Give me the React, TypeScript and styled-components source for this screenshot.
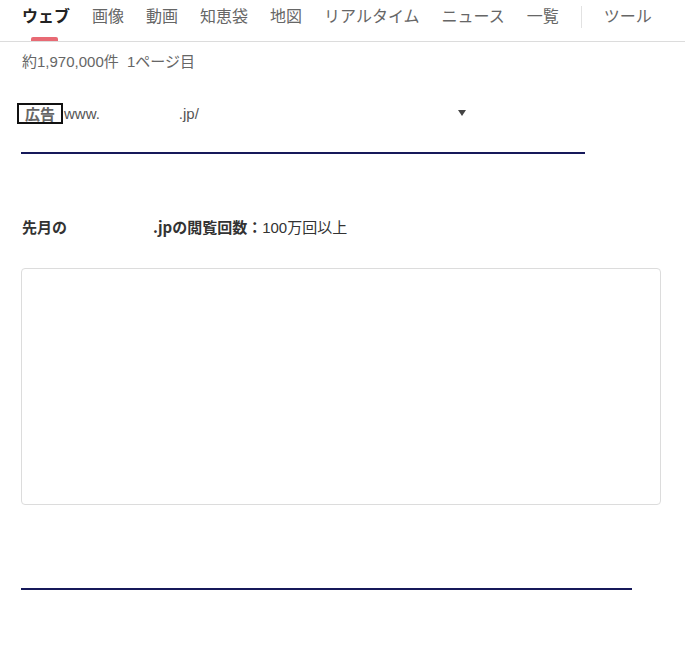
import React from 'react';
import styled, { createGlobalStyle } from 'styled-components';

const GlobalStyle = createGlobalStyle`
  body {
    margin: 0;
    background: #fff;
    font-family: "Liberation Sans", "Noto Sans CJK JP", sans-serif;
  }
`;

const Page = styled.div`
  width: 685px;
  height: 656px;
  overflow: hidden;
  background: #fff;
`;

const TabBar = styled.nav`
  display: flex;
  align-items: stretch;
  height: 41px;
  padding-left: 22px;
  gap: 22px;
  border-bottom: 1px solid #dcdcdc;
`;

const Tab = styled.div<{ $active?: boolean }>`
  position: relative;
  display: flex;
  align-items: flex-start;
  padding-top: 4px;
  font-family: "Noto Sans CJK JP", sans-serif;
  font-size: 16px;
  line-height: 22px;
  font-weight: ${(p) => (p.$active ? 700 : 400)};
  color: ${(p) => (p.$active ? '#222' : '#666')};
  white-space: nowrap;

  ${(p) => p.$active && `
    &::after {
      content: '';
      position: absolute;
      left: 9px;
      width: 27px;
      bottom: 0;
      height: 4px;
      border-radius: 2px 2px 0 0;
      background: #e86a74;
    }
  `}
`;

const Separator = styled.span`
  width: 1px;
  height: 22px;
  margin-top: 6px;
  background: #e2e2e2;
`;

const Content = styled.main`
  padding: 0 25px 0 21px;
`;

const Count = styled.p`
  margin: 10px 0 0 1px;
  font-family: "Liberation Sans", "Noto Sans CJK JP", sans-serif;
  font-size: 15px;
  line-height: 20px;
  color: #666;
  word-spacing: 4px;
`;

const AdRow = styled.div`
  display: flex;
  align-items: center;
  margin: 30px 0 0 -4px;
  height: 22px;
  font-size: 15px;
  color: #555;
`;

const AdLabel = styled.span`
  box-sizing: border-box;
  display: flex;
  align-items: center;
  justify-content: center;
  width: 46px;
  height: 21px;
  border: 2px solid #111;
  font-family: "Noto Sans CJK JP", sans-serif;
  font-weight: 700;
  font-size: 15px;
  line-height: 1;
  color: #666;
  margin-right: 1px;
`;

const Blank = styled.span<{ $w: number }>`
  display: inline-block;
  width: ${(p) => p.$w}px;
`;

const Caret = styled.span`
  width: 0;
  height: 0;
  margin-left: 259px;
  border-left: 4px solid transparent;
  border-right: 4px solid transparent;
  border-top: 6px solid #444;
`;

const Rule = styled.div<{ $w: number; $top: number }>`
  width: ${(p) => p.$w}px;
  height: 2px;
  margin-top: ${(p) => p.$top}px;
  background: #16195a;
`;

const Stat = styled.p`
  margin: 62px 0 0 1px;
  font-family: "Noto Sans CJK JP", sans-serif;
  font-size: 15px;
  line-height: 22px;
  color: #333;

  b {
    font-weight: 700;
  }
`;

const Num = styled.span`
  font-family: "Liberation Sans", "Noto Sans CJK JP", sans-serif;
`;

const Card = styled.div`
  box-sizing: border-box;
  width: 640px;
  height: 237px;
  margin-top: 29px;
  border: 1px solid #dcdcdc;
  border-radius: 4px;
`;

export default function App() {
  const tabs = ['画像', '動画', '知恵袋', '地図', 'リアルタイム', 'ニュース', '一覧'];
  return (
    <Page>
      <GlobalStyle />
      <TabBar>
        <Tab $active>ウェブ</Tab>
        {tabs.map((t) => (
          <Tab key={t}>{t}</Tab>
        ))}
        <Separator />
        <Tab>ツール</Tab>
      </TabBar>
      <Content>
        <Count>約1,970,000件 1ページ目</Count>
        <AdRow>
          <AdLabel>広告</AdLabel>
          <span>www.</span>
          <Blank $w={79} />
          <span>.jp/</span>
          <Caret />
        </AdRow>
        <Rule $w={564} $top={28} />
        <Stat>
          <b>先月の</b>
          <Blank $w={86} />
          <b>.jpの閲覧回数：</b>
          <Num>100</Num>万回以上
        </Stat>
        <Card />
        <Rule $w={611} $top={83} />
      </Content>
    </Page>
  );
}
